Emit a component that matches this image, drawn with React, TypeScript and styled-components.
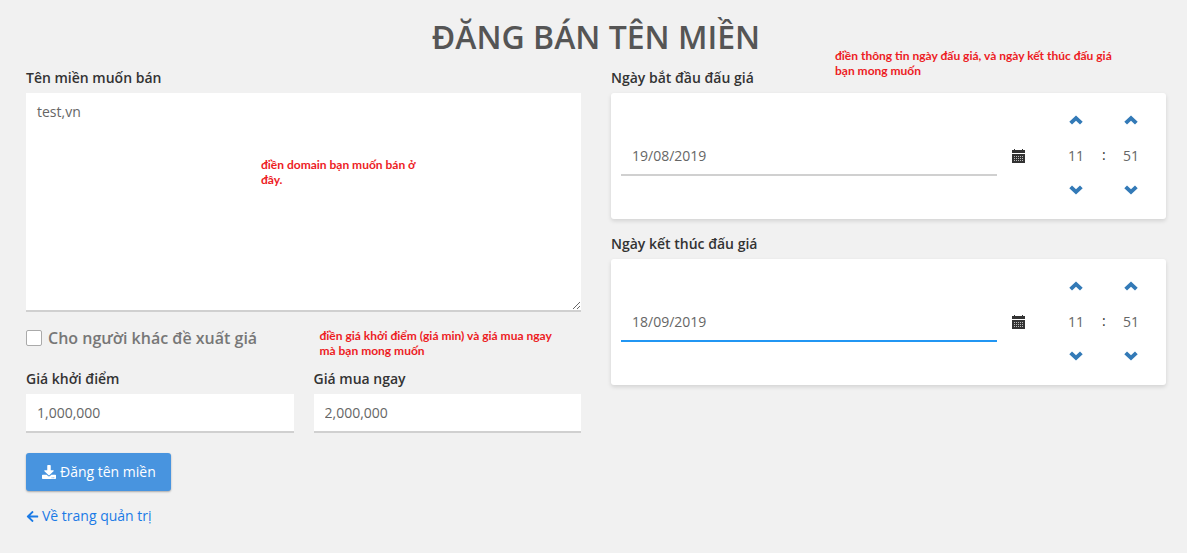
import React, { useState } from 'react';
import styled, { createGlobalStyle } from 'styled-components';
import { FaArrowLeft, FaDownload } from 'react-icons/fa';

const GlobalStyle = createGlobalStyle`
  *, *::before, *::after { box-sizing: border-box; }
  body {
    margin: 0;
    background: #f1f1f1;
    color: #333;
    font-family: 'Open Sans', 'Noto Sans', sans-serif;
    font-size: 14px;
    line-height: 20px;
  }
  input, textarea, button { font: inherit; }
`;

const Page = styled.main`
  padding: 17px 21px 26px 26px;
`;

const Title = styled.h1`
  margin: 0 0 11px;
  color: #555;
  font-size: 32px;
  font-weight: 600;
  line-height: 40px;
  text-align: center;
`;

const Columns = styled.form`
  display: grid;
  grid-template-columns: 1fr 1fr;
  gap: 30px;
  align-items: start;
`;

const Column = styled.div`
  display: flex;
  flex-direction: column;
`;

const Pair = styled.div`
  display: grid;
  grid-template-columns: 1fr 1fr;
  gap: 20px;
`;

const OptionRow = styled(Pair)`
  align-items: start;
  margin: 16px 0 11px;
`;

const Field = styled.div`
  position: relative;
  display: flex;
  flex-direction: column;
  min-width: 0;
`;

const Label = styled.label`
  margin-bottom: 5px;
  font-weight: 600;
`;

const TextInput = styled.input<{ $active?: boolean }>`
  width: 100%;
  height: 39px;
  min-width: 0;
  padding: 0 11px;
  border: 0;
  border-bottom: 2px solid ${(p) => (p.$active ? '#2196f3' : '#d0d0d0')};
  border-radius: 0;
  outline: 0;
  background: #fff;
  color: #666;
`;

const TextArea = styled.textarea`
  display: block;
  width: 100%;
  height: 219px;
  padding: 9px 11px;
  border: 0;
  border-bottom: 2px solid #d0d0d0;
  outline: 0;
  background: #fff;
  color: #666;
  resize: vertical;
`;

const CheckLabel = styled.label`
  display: flex;
  align-items: center;
  gap: 6px;
  color: #777;
  font-size: 16px;
  font-weight: 600;
  white-space: nowrap;
`;

const Checkbox = styled.input`
  appearance: none;
  width: 16px;
  height: 16px;
  margin: 0;
  border: 1px solid #aaa;
  border-radius: 2px;
  background: #fff;
  &:checked { background: #4894df; }
`;

const Note = styled.p`
  margin: 0;
  color: #ed1c24;
  font-family: Lato, 'Open Sans', sans-serif;
  font-size: 12px;
  font-weight: 700;
  line-height: 15px;
  white-space: nowrap;
`;

const OptionNote = styled(Note)`
  padding-left: 6px;
`;

const FloatingNote = styled(Note)<{ $left: number; $top: number }>`
  position: absolute;
  left: ${(p) => p.$left}px;
  top: ${(p) => p.$top}px;
`;

const SubmitButton = styled.button`
  display: flex;
  align-items: center;
  align-self: flex-start;
  gap: 4px;
  height: 38px;
  margin-top: 20px;
  padding: 0 15px 0 16px;
  border: 0;
  border-radius: 3px;
  background: #4894df;
  box-shadow: 0 1px 2px rgba(0, 0, 0, 0.3);
  color: #fff;
  cursor: pointer;
`;

const BackLink = styled.a`
  display: flex;
  align-items: center;
  align-self: flex-start;
  gap: 3px;
  margin-top: 15px;
  color: #1a7ae6;
  text-decoration: none;
`;

const Card = styled.div`
  display: flex;
  align-items: center;
  margin-bottom: 15px;
  padding: 10px;
  border-radius: 3px;
  background: #fff;
  box-shadow: 0 2px 4px rgba(0, 0, 0, 0.13);
`;

const IconButton = styled.button`
  display: flex;
  align-items: center;
  justify-content: center;
  padding: 0;
  border: 0;
  background: none;
  color: #333;
  cursor: pointer;
`;

const CalendarButton = styled(IconButton)`
  flex: none;
  width: 14px;
  margin: 0 25px 0 15px;
`;

const TimePicker = styled.div`
  display: flex;
  flex: none;
  align-items: center;
  gap: 1px;
  margin-bottom: 2px;
`;

const Spinner = styled.div`
  display: flex;
  flex-direction: column;
  width: 50px;
`;

const StepButton = styled(IconButton)`
  height: 34px;
  color: #337ab7;
`;

const TimeInput = styled.input`
  width: 100%;
  height: 36px;
  padding: 0;
  border: 0;
  outline: 0;
  background: none;
  color: #666;
  text-align: center;
`;

const Colon = styled.span`
  width: 3px;
  text-align: center;
`;

const Chevron = ({ down }: { down?: boolean }) => (
  <svg width="14" height="10" viewBox="0 0 14 10" aria-hidden="true">
    <path
      d={down ? 'M3 .5 7 4.3 11 .5 13.7 3.2 7 9.5.3 3.2Z' : 'M7 .5 13.7 6.8 11 9.5 7 5.7 3 9.5.3 6.8Z'}
      fill="currentColor"
    />
  </svg>
);

const CalendarIcon = () => (
  <svg width="14" height="14" viewBox="0 0 14 14" aria-hidden="true" shapeRendering="crispEdges">
    <path d="M0 1h2V0h1v1h7V0h1v1h2v3H0ZM0 5h13v9H0Z" fill="currentColor" />
    <path
      d="M2 7h1v1H2zm2 0h1v1H4zm2 0h1v1H6zm2 0h1v1H8zm2 0h1v1h-1zM2 9h1v1H2zm2 0h1v1H4zm2 0h1v1H6zm2 0h1v1H8zm2 0h1v1h-1zM2 11h1v1H2zm2 0h1v1H4zm2 0h1v1H6zm2 0h1v1H8zm2 0h1v1h-1z"
      fill="#bbb"
    />
  </svg>
);

const pad = (n: number) => String(n).padStart(2, '0');

const TimeSpinner = ({ name, initial, max }: { name: string; initial: number; max: number }) => {
  const [value, setValue] = useState(initial);
  const step = (by: number) => setValue((value + by + max) % max);
  return (
    <Spinner>
      <StepButton type="button" aria-label={`Tăng ${name}`} onClick={() => step(1)}>
        <Chevron />
      </StepButton>
      <TimeInput aria-label={name} value={pad(value)} onChange={(e) => setValue(Number(e.target.value) % max || 0)} />
      <StepButton type="button" aria-label={`Giảm ${name}`} onClick={() => step(-1)}>
        <Chevron down />
      </StepButton>
    </Spinner>
  );
};

const DateTimeField = ({ id, label, date, active, children }: {
  id: string;
  label: string;
  date: string;
  active?: boolean;
  children?: React.ReactNode;
}) => (
  <Field>
    <Label htmlFor={id}>{label}</Label>
    <Card>
      <TextInput id={id} defaultValue={date} $active={active} />
      <CalendarButton type="button" aria-label="Chọn ngày">
        <CalendarIcon />
      </CalendarButton>
      <TimePicker>
        <TimeSpinner name="giờ" initial={11} max={24} />
        <Colon>:</Colon>
        <TimeSpinner name="phút" initial={51} max={60} />
      </TimePicker>
    </Card>
    {children}
  </Field>
);

export default function App() {
  return (
    <Page>
      <GlobalStyle />
      <Title>ĐĂNG BÁN TÊN MIỀN</Title>
      <Columns onSubmit={(e) => e.preventDefault()}>
        <Column>
          <Field>
            <Label htmlFor="domains">Tên miền muốn bán</Label>
            <TextArea id="domains" defaultValue="test,vn" spellCheck={false} />
            <FloatingNote $left={235} $top={89}>
              điền domain bạn muốn bán ở<br />đây.
            </FloatingNote>
          </Field>
          <OptionRow>
            <CheckLabel>
              <Checkbox type="checkbox" />
              Cho người khác đề xuất giá
            </CheckLabel>
            <OptionNote>
              điền giá khởi điểm (giá min) và giá mua ngay<br />mà bạn mong muốn
            </OptionNote>
          </OptionRow>
          <Pair>
            <Field>
              <Label htmlFor="start-price">Giá khởi điểm</Label>
              <TextInput id="start-price" defaultValue="1,000,000" />
            </Field>
            <Field>
              <Label htmlFor="buy-price">Giá mua ngay</Label>
              <TextInput id="buy-price" defaultValue="2,000,000" />
            </Field>
          </Pair>
          <SubmitButton type="submit">
            <FaDownload size={14} aria-hidden="true" />
            Đăng tên miền
          </SubmitButton>
          <BackLink href="#">
            <FaArrowLeft size={13} aria-hidden="true" />
            Về trang quản trị
          </BackLink>
        </Column>
        <Column>
          <DateTimeField id="start-date" label="Ngày bắt đầu đấu giá" date="19/08/2019">
            <FloatingNote $left={224} $top={-20}>
              điền thông tin ngày đấu giá, và ngày kết thúc đấu giá<br />bạn mong muốn
            </FloatingNote>
          </DateTimeField>
          <DateTimeField id="end-date" label="Ngày kết thúc đấu giá" date="18/09/2019" active />
        </Column>
      </Columns>
    </Page>
  );
}
